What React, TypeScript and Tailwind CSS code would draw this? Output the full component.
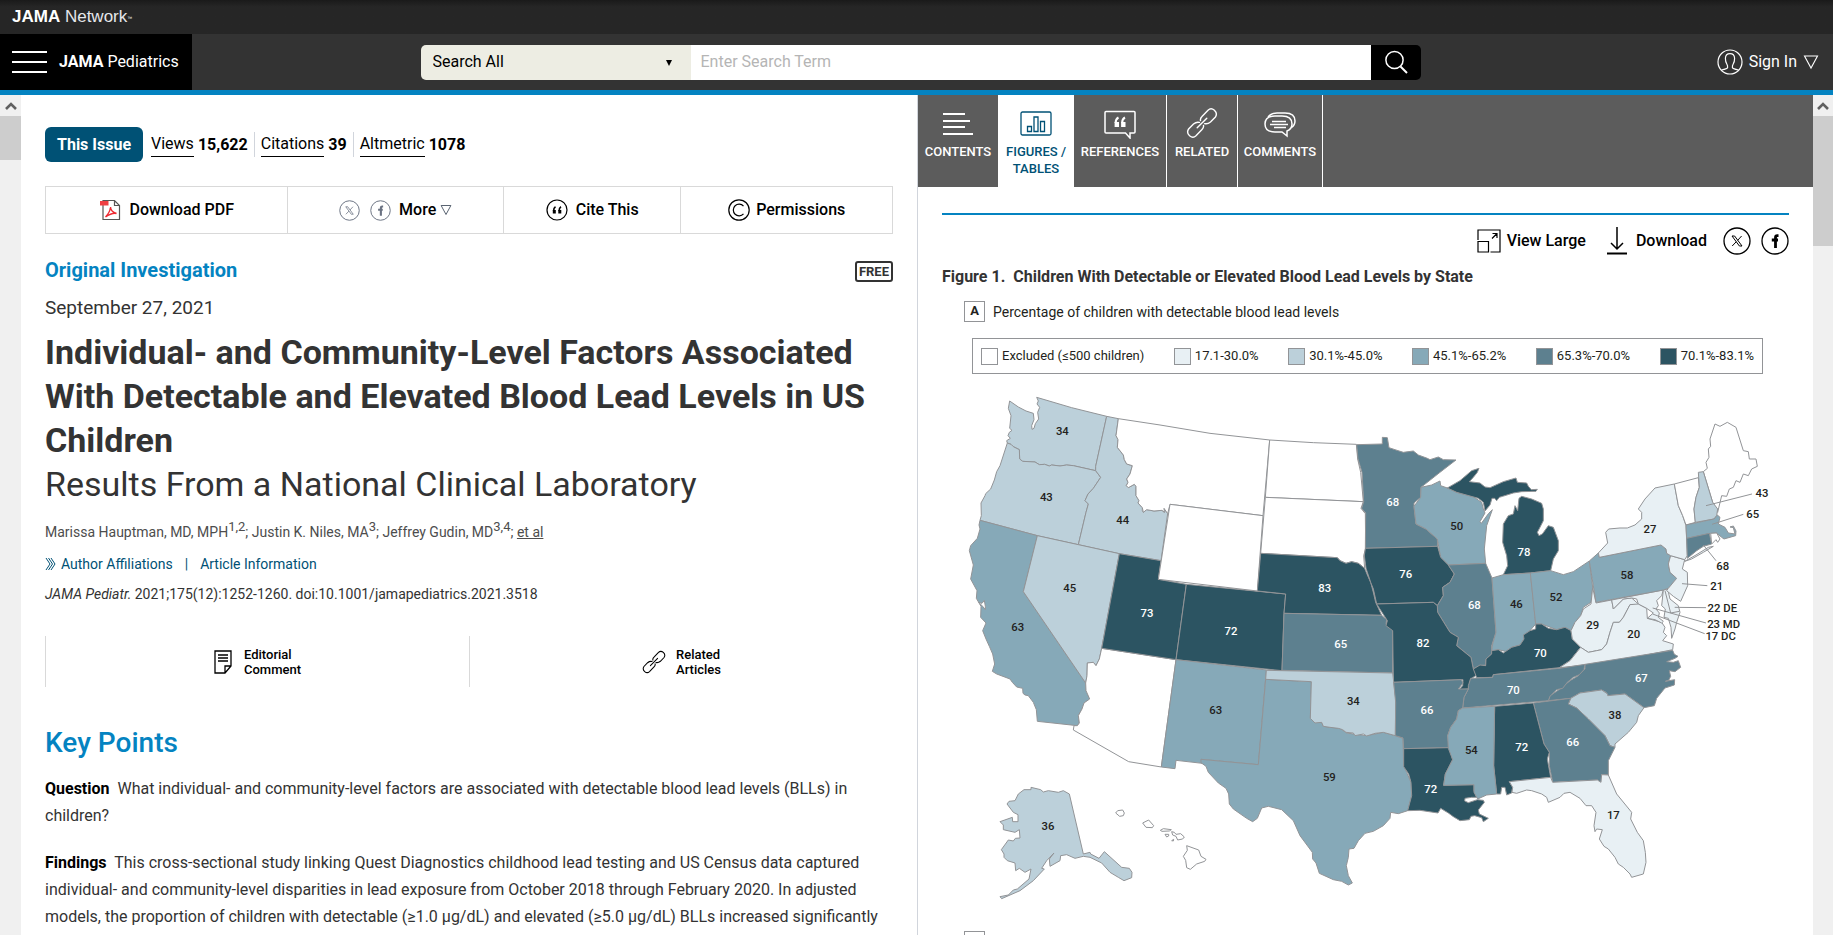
import React from "react";

const EXCLUDED = "#ffffff";
const LEVEL_1 = "#e8f0f4";
const LEVEL_2 = "#bcd0da";
const LEVEL_3 = "#86a9b8";
const LEVEL_4 = "#5d808f";
const LEVEL_5 = "#2c5462";

type Shape = { id: string; fill: string; d: string };
type Label = { x: number; y: number; text: string; light?: boolean };
type Region = { origin: string; shapes: Shape[]; labels: Label[] };

// Outlines are grouped by map quadrant, each with its own origin
const regions: Region[] = [
  {
    origin: "translate(0 0)",
    shapes: [
      { id: "WA", fill: LEVEL_2, d: "M179,96 L205,114 L228,126 L250,133 L252,152 L245,170 L246,181 L252,178 L256,164 L266,150 L263,130 L269,115 L261,105 L265,96 L260,85 L365,116 L470,142 L437,292 L437,305 L370,290 L350,288 L330,291 L305,288 L298,291 L284,286 L268,287 L255,279 L218,277 L209,270 L208,242 L190,233 L183,226 L172,222 L170,215 L181,208 L174,200 L178,190 L186,184 L179,178 L183,140 L175,118Z" },
      { id: "OR", fill: LEVEL_2, d: "M172,222 L183,226 L190,233 L208,242 L209,270 L218,277 L255,279 L268,287 L284,286 L298,291 L305,288 L330,291 L350,288 L370,290 L437,305 L452,325 L430,358 L414,375 L405,395 L415,405 L408,430 L385,527 L262,500 L90,454 L94,440 L93,402 L105,380 L107,374 L122,360 L133,333 L140,308 L150,290Z" },
      { id: "ID", fill: LEVEL_2, d: "M470,142 L505,149 L498,200 L504,212 L502,235 L520,258 L523,272 L530,285 L547,290 L540,315 L530,330 L534,340 L529,350 L535,356 L553,346 L558,352 L558,380 L567,395 L564,402 L577,416 L577,425 L580,430 L590,422 L612,426 L636,424 L643,430 L642,418 L653,434 L633,575 L508,554 L385,527 L408,430 L415,405 L405,395 L414,375 L430,358 L452,325 L437,305 L437,292Z" },
      { id: "MT", fill: EXCLUDED, d: "M505,149 L630,168 L780,193 L959,213 L939,440 L660,406 L653,434 L642,418 L643,430 L636,424 L612,426 L590,422 L580,430 L577,416 L564,402 L567,395 L558,380 L558,352 L553,346 L535,356 L529,350 L534,340 L530,330 L540,315 L547,290 L530,285 L523,272 L520,258 L502,235 L504,212 L498,200Z" },
      { id: "ND", fill: EXCLUDED, d: "M959,213 L1090,221 L1219,226 L1223,270 L1232,310 L1240,398 L946,385Z" },
      { id: "SD", fill: EXCLUDED, d: "M946,385 L1240,398 L1233,418 L1246,434 L1247,538 L1241,560 L1244,598 L1225,583 L1205,578 L1188,583 L1170,575 L1162,566 L932,553Z" },
      { id: "CA", fill: LEVEL_3, d: "M90,454 L262,500 L220,668 L407,942 L408,965 L419,990 L402,1002 L396,1020 L385,1040 L388,1062 L382,1070 L262,1057 L259,1022 L250,1000 L235,980 L225,978 L219,973 L218,958 L200,954 L187,940 L180,930 L140,915 L127,907 L134,885 L128,855 L118,832 L108,810 L98,785 L108,762 L92,745 L93,712 L79,688 L81,665 L62,630 L70,588 L58,545 L62,530 L82,508 L90,480 L87,468Z" },
      { id: "SF Bay", fill: EXCLUDED, d: "M86,700 L98,712 L106,722 L106,712 L103,694 L96,703Z" },
      { id: "NV", fill: LEVEL_2, d: "M262,500 L385,527 L508,554 L455,838 L448,870 L438,890 L430,880 L412,882 L411,920 L407,942 L220,668Z" },
      { id: "AZ", fill: EXCLUDED, d: "M455,838 L678,872 L634,1194 L536,1178 L370,1083 L372,1070 L382,1070 L388,1062 L385,1040 L396,1020 L402,1002 L419,990 L408,965 L407,942 L411,920 L412,882 L430,880 L438,890 L448,870Z" },
      { id: "UT", fill: LEVEL_5, d: "M508,554 L633,575 L625,631 L709,646 L678,872 L455,838Z" },
      { id: "CO", fill: LEVEL_5, d: "M709,646 L1007,675 L1002,735 L996,905 L678,872Z" },
      { id: "WY", fill: EXCLUDED, d: "M660,406 L939,440 L922,666 L625,631Z" },
      { id: "NM", fill: LEVEL_3, d: "M678,872 L949,903 L925,1187 L753,1171 L757,1183 L678,1174 L675,1199 L634,1194Z" },
      { id: "NE", fill: LEVEL_5, d: "M932,553 L1162,566 L1170,575 L1188,583 L1205,578 L1225,583 L1244,598 L1253,620 L1262,640 L1270,670 L1277,700 L1295,739 L1002,733 L1007,675 L922,666Z" },
      { id: "KS", fill: LEVEL_4, d: "M1002,733 L1295,739 L1310,752 L1308,765 L1328,785 L1328,912 L996,904Z" },
    ],
    labels: [
      { x: 337, y: 198, text: "34" },
      { x: 289, y: 395, text: "43" },
      { x: 518, y: 466, text: "44" },
      { x: 359, y: 670, text: "45" },
      { x: 203, y: 785, text: "63" },
      { x: 591, y: 743, text: "73", light: true },
      { x: 843, y: 798, text: "72", light: true },
      { x: 1124, y: 668, text: "83", light: true },
      { x: 1172, y: 838, text: "65", light: true },
      { x: 797, y: 1036, text: "63" },
    ],
  },
  {
    origin: "translate(1170 120)",
    shapes: [
      { id: "MN", fill: LEVEL_4, d: "M50,107 L127,105 L127,85 L142,86 L147,116 L165,122 L190,130 L220,126 L235,138 L262,148 L270,152 L295,144 L310,152 L348,153 L300,190 L243,235 L242,265 L222,282 L222,292 L228,345 L258,360 L292,390 L293,412 L76,418 L77,312 L65,298 L71,278 L66,190 L54,150Z" },
      { id: "WI", fill: LEVEL_3, d: "M243,235 L275,228 L300,216 L302,230 L325,238 L350,250 L400,263 L425,280 L430,300 L435,312 L420,338 L424,343 L446,313 L457,302 L440,350 L433,420 L437,463 L325,468 L302,445 L292,390 L258,360 L228,345 L222,292 L242,265Z" },
      { id: "MI-upper", fill: LEVEL_5, d: "M322,237 L360,215 L395,185 L417,178 L412,190 L400,205 L388,218 L420,222 L435,234 L450,236 L490,218 L528,207 L532,220 L560,222 L565,232 L574,242 L592,241 L588,247 L545,248 L520,252 L488,262 L478,265 L470,275 L464,268 L456,268 L450,288 L435,306 L430,280 L415,268 L350,250Z" },
      { id: "MI-lower", fill: LEVEL_5, d: "M545,262 L575,270 L605,283 L610,300 L610,335 L600,355 L592,370 L597,380 L607,375 L625,350 L640,355 L655,395 L655,425 L640,450 L632,485 L571,492 L490,497 L503,470 L500,440 L488,400 L490,345 L505,320 L520,315 L525,290 L533,305 L537,268Z" },
      { id: "IA", fill: LEVEL_5, d: "M76,418 L293,412 L302,445 L325,468 L343,495 L330,520 L308,535 L310,560 L292,590 L280,580 L110,585 L100,540 L92,520 L78,478 L73,440Z" },
      { id: "IL", fill: LEVEL_4, d: "M325,468 L437,463 L456,507 L468,670 L455,710 L455,735 L438,750 L437,768 L420,770 L400,780 L393,745 L350,710 L355,685 L330,670 L293,610 L292,590 L310,560 L308,535 L330,520 L343,495Z" },
      { id: "IN", fill: LEVEL_3, d: "M456,507 L490,497 L571,492 L587,645 L570,665 L552,690 L540,708 L515,715 L500,728 L475,722 L455,727 L458,705 L468,670Z" },
      { id: "OH", fill: LEVEL_3, d: "M571,492 L632,485 L670,497 L700,488 L748,456 L758,535 L753,580 L730,595 L722,620 L705,640 L693,665 L675,655 L650,662 L605,645 L587,645Z" },
      { id: "MO", fill: LEVEL_5, d: "M110,585 L280,580 L292,590 L293,610 L330,670 L355,685 L350,710 L393,745 L400,780 L410,775 L407,800 L392,810 L385,840 L357,842 L368,830 L369,812 L160,820 L158,665 L138,650 L142,635Z" },
      { id: "KY", fill: LEVEL_5, d: "M400,780 L420,768 L437,770 L438,750 L455,735 L455,725 L475,722 L490,732 L515,715 L540,708 L552,690 L550,678 L570,665 L587,660 L587,645 L605,645 L625,658 L650,662 L675,655 L693,665 L697,690 L722,715 L690,755 L658,776 L460,797 L458,805 L410,806Z" },
      { id: "WV", fill: LEVEL_1, d: "M758,535 L768,582 L815,573 L820,600 L850,570 L875,567 L895,585 L890,590 L870,587 L850,625 L838,640 L820,640 L810,670 L800,705 L785,722 L770,725 L745,730 L722,715 L697,690 L693,665 L705,640 L722,620 L730,600 L753,585Z" },
      { id: "VA", fill: LEVEL_1, d: "M895,585 L920,598 L922,628 L965,640 L975,655 L970,670 L980,680 L968,695 L1000,705 L998,722 L870,748 L740,768 L658,776 L690,755 L722,715 L745,730 L770,725 L785,722 L800,705 L810,670 L820,640 L838,640 L850,625 L870,587Z" },
      { id: "MD", fill: LEVEL_1, d: "M815,573 L970,543 L965,560 L950,575 L955,590 L948,600 L958,612 L955,625 L970,637 L965,642 L945,632 L922,628 L940,612 L920,598 L895,585 L890,570 L875,567 L850,570 L820,600Z" },
      { id: "Delmarva", fill: LEVEL_1, d: "M970,543 L983,540 L990,570 L1015,590 L1020,610 L1010,640 L1005,660 L995,688 L993,655 L985,628 L972,625 L976,600 L965,590Z" },
      { id: "PA", fill: LEVEL_3, d: "M748,456 L775,432 L778,445 L963,408 L978,420 L980,433 L992,440 L985,465 L990,490 L1010,508 L985,538 L970,543 L768,580Z" },
      { id: "NJ", fill: LEVEL_1, d: "M992,440 L1034,452 L1027,480 L1042,490 L1043,530 L1022,577 L1000,562 L980,545 L985,538 L1010,508 L990,490 L985,465Z" },
      { id: "NY", fill: LEVEL_1, d: "M775,432 L803,402 L797,370 L806,360 L840,357 L862,357 L885,348 L905,330 L905,310 L895,300 L915,270 L945,237 L1003,225 L1015,290 L1028,320 L1038,350 L1042,440 L1034,452 L992,440 L980,433 L978,420 L963,408 L778,445Z" },
      { id: "Long Island", fill: LEVEL_1, d: "M1034,457 L1068,438 L1105,415 L1120,412 L1090,430 L1055,450Z" },
      { id: "VT", fill: EXCLUDED, d: "M1003,225 L1075,206 L1078,235 L1068,265 L1062,300 L1066,340 L1038,348 L1028,320 L1015,290Z" },
      { id: "ME", fill: EXCLUDED, d: "M1090,188 L1102,178 L1098,160 L1107,145 L1105,120 L1112,112 L1110,90 L1125,45 L1140,52 L1162,40 L1188,55 L1210,125 L1225,128 L1228,150 L1248,150 L1252,172 L1235,180 L1225,200 L1210,195 L1200,220 L1188,215 L1180,235 L1168,240 L1160,262 L1145,260 L1133,310 L1118,280Z" },
      { id: "NH", fill: LEVEL_2, d: "M1075,190 L1090,188 L1118,280 L1133,300 L1130,320 L1122,330 L1066,340 L1062,300 L1068,265 L1078,235Z" },
      { id: "MA", fill: LEVEL_3, d: "M1038,348 L1122,330 L1132,318 L1140,325 L1135,345 L1155,355 L1165,372 L1185,375 L1180,356 L1170,354 L1180,351 L1188,366 L1187,380 L1152,390 L1145,385 L1130,372 L1112,373 L1040,388Z" },
      { id: "CT", fill: LEVEL_4, d: "M1040,388 L1108,373 L1115,405 L1090,412 L1070,425 L1042,448Z" },
      { id: "RI", fill: EXCLUDED, d: "M1112,373 L1130,372 L1140,390 L1133,400 L1128,392 L1115,405Z" },
    ],
    labels: [
      { x: 158, y: 291, text: "68", light: true },
      { x: 350, y: 364, text: "50" },
      { x: 552, y: 440, text: "78", light: true },
      { x: 197, y: 508, text: "76", light: true },
      { x: 403, y: 600, text: "68", light: true },
      { x: 529, y: 596, text: "46" },
      { x: 648, y: 575, text: "52" },
      { x: 249, y: 714, text: "82", light: true },
      { x: 601, y: 744, text: "70", light: true },
      { x: 758, y: 659, text: "29" },
      { x: 881, y: 687, text: "20" },
      { x: 930, y: 371, text: "27" },
      { x: 861, y: 510, text: "58" },
      { x: 1266, y: 264, text: "43" },
      { x: 1238, y: 326, text: "65" },
      { x: 1148, y: 484, text: "68" },
      { x: 1130, y: 544, text: "21" },
      { x: 1147, y: 609, text: "22 DE" },
      { x: 1151, y: 656, text: "23 MD" },
      { x: 1142, y: 693, text: "17 DC" },
    ],
  },
  {
    origin: "translate(0 810)",
    shapes: [
      { id: "TX", fill: LEVEL_3, d: "M947,121 L1084,128 L1081,238 L1095,250 L1115,250 L1120,262 L1140,265 L1170,268 L1190,282 L1210,285 L1250,290 L1300,280 L1336,290 L1359,298 L1361,380 L1370,400 L1383,430 L1385,470 L1373,515 L1345,524 L1322,520 L1320,538 L1300,560 L1270,577 L1245,583 L1225,605 L1212,628 L1197,630 L1195,655 L1189,680 L1195,710 L1207,732 L1195,738 L1175,727 L1150,722 L1108,703 L1098,672 L1088,660 L1087,640 L1050,590 L1030,545 L995,512 L955,502 L935,507 L922,538 L908,548 L890,538 L850,510 L838,495 L836,465 L828,448 L805,432 L775,400 L768,382 L753,371 L753,361 L925,377Z" },
      { id: "OK", fill: LEVEL_2, d: "M949,94 L1328,102 L1337,180 L1336,290 L1300,280 L1275,283 L1250,291 L1240,285 L1215,290 L1210,282 L1188,280 L1178,272 L1165,268 L1140,265 L1120,262 L1115,250 L1095,252 L1081,238 L1084,128 L947,121Z" },
      { id: "AK", fill: LEVEL_2, d: "M243,445 L272,452 L280,459 L295,455 L325,460 L340,455 L358,465 L400,645 L420,640 L422,645 L447,658 L463,638 L515,685 L538,688 L546,700 L545,716 L522,725 L505,715 L480,700 L455,672 L420,655 L400,652 L375,658 L350,647 L332,650 L330,665 L300,682 L298,660 L312,642 L290,665 L275,688 L283,690 L250,725 L210,755 L155,779 L150,773 L175,768 L190,753 L202,750 L237,720 L243,690 L225,700 L208,688 L197,695 L195,672 L172,665 L162,655 L162,645 L154,632 L175,603 L190,606 L196,598 L210,597 L208,572 L195,580 L160,572 L160,558 L150,548 L187,535 L188,548 L204,548 L204,527 L190,520 L171,495 L177,487 L195,485 L205,465 L222,452 L243,452Z" },
      { id: "Kauai", fill: EXCLUDED, d: "M497,522 L503,515 L518,513 L523,522 L520,530 L509,532Z" },
      { id: "Oahu", fill: EXCLUDED, d: "M578,552 L596,543 L611,560 L607,566 L588,565Z" },
      { id: "Molokai", fill: EXCLUDED, d: "M631,574 L640,569 L664,572 L658,576 L636,577Z" },
      { id: "Lanai", fill: EXCLUDED, d: "M645,586 L656,586 L656,591 L650,594Z" },
      { id: "Kahoolawe", fill: EXCLUDED, d: "M665,605 L671,601 L670,606Z" },
      { id: "Maui", fill: EXCLUDED, d: "M665,578 L673,580 L678,586 L692,584 L703,594 L698,600 L683,603 L678,592 L668,588Z" },
      { id: "Hawaii", fill: EXCLUDED, d: "M710,620 L746,633 L753,652 L768,661 L764,667 L740,675 L721,691 L710,686 L707,664 L700,652 L712,634Z" },
    ],
    labels: [
      { x: 1210, y: 199, text: "34" },
      { x: 1138, y: 426, text: "59" },
      { x: 294, y: 573, text: "36" },
    ],
  },
  {
    origin: "translate(1170 810)",
    shapes: [
      { id: "NC", fill: LEVEL_4, d: "M735,76 L998,34 L1003,46 L1014,52 L1005,58 L980,68 L1000,70 L1015,65 L1022,85 L1005,98 L988,95 L992,112 L986,124 L976,127 L1004,122 L1003,138 L975,147 L950,178 L943,200 L912,206 L855,165 L803,170 L798,160 L785,153 L720,162 L692,178 L625,185 L630,170 L660,150 L690,125 L715,110 L735,90Z" },
      { id: "TN", fill: LEVEL_4, d: "M392,118 L458,115 L460,107 L658,88 L735,76 L732,92 L718,107 L700,115 L682,130 L668,148 L650,152 L630,172 L625,185 L368,207 L372,175 L385,150 L385,140Z" },
      { id: "SC", fill: LEVEL_2, d: "M692,178 L720,162 L785,153 L803,165 L803,170 L855,165 L912,206 L895,230 L890,250 L865,280 L825,315 L825,325 L810,320 L795,290 L745,240 L710,207 L685,195Z" },
      { id: "GA", fill: LEVEL_4, d: "M580,192 L692,178 L685,195 L710,207 L745,240 L795,290 L810,320 L825,325 L805,365 L805,408 L785,407 L783,430 L772,423 L638,430 L628,380 L628,340 L612,315Z" },
      { id: "AL", fill: LEVEL_5, d: "M464,202 L580,192 L612,315 L628,340 L622,360 L632,415 L508,428 L518,445 L515,462 L500,468 L495,445 L485,445 L482,465 L470,465 L461,380Z" },
      { id: "AR", fill: LEVEL_4, d: "M161,130 L364,122 L369,132 L355,150 L385,150 L372,175 L368,207 L355,215 L350,240 L332,265 L323,290 L328,326 L191,329 L189,297 L166,290 L167,190Z" },
      { id: "LA", fill: LEVEL_5, d: "M191,329 L328,326 L338,362 L316,405 L311,439 L402,437 L402,455 L410,475 L395,475 L375,478 L374,486 L385,491 L412,482 L430,484 L433,490 L415,513 L418,525 L445,538 L430,548 L425,536 L404,530 L393,532 L388,542 L360,545 L340,533 L325,522 L302,508 L294,522 L240,514 L203,515 L215,470 L213,430 L206,405 L191,383Z" },
      { id: "MS", fill: LEVEL_3, d: "M368,207 L464,202 L461,380 L470,465 L440,468 L413,480 L402,460 L402,437 L311,439 L316,405 L338,362 L325,328 L323,290 L332,265 L350,240 L355,215Z" },
      { id: "FL", fill: LEVEL_1, d: "M508,428 L632,415 L638,430 L772,423 L783,430 L785,407 L805,408 L830,465 L875,520 L872,540 L892,580 L910,605 L916,640 L918,670 L910,705 L875,715 L870,705 L850,685 L835,675 L825,655 L805,630 L792,622 L778,600 L787,572 L770,570 L765,578 L762,560 L768,520 L755,500 L738,500 L720,478 L690,460 L672,463 L660,475 L625,490 L620,475 L605,465 L575,455 L560,453 L530,463 L516,460 L518,445Z" },
    ],
    labels: [
      { x: 904, y: 130, text: "67", light: true },
      { x: 520, y: 164, text: "70", light: true },
      { x: 261, y: 226, text: "66", light: true },
      { x: 825, y: 240, text: "38" },
      { x: 698, y: 322, text: "66", light: true },
      { x: 545, y: 336, text: "72", light: true },
      { x: 394, y: 346, text: "54" },
      { x: 272, y: 462, text: "72", light: true },
      { x: 820, y: 540, text: "17" },
    ],
  },
];

const legend = [
  { label: "Excluded (≤500 children)", swatch: "bg-white" },
  { label: "17.1-30.0%", swatch: "bg-[#e8f0f4]" },
  { label: "30.1%-45.0%", swatch: "bg-[#bcd0da]" },
  { label: "45.1%-65.2%", swatch: "bg-[#86a9b8]" },
  { label: "65.3%-70.0%", swatch: "bg-[#5d808f]" },
  { label: "70.1%-83.1%", swatch: "bg-[#2c5462]" },
];

function StateMap() {
  return (
    <svg viewBox="-24 15 2541 1660" className="block w-full" role="img" aria-label="Map of detectable blood lead levels by state">
      {regions.map((region) => (
        <g key={region.origin} transform={region.origin} stroke="#929497" strokeWidth="3" strokeLinejoin="round">
          {region.shapes.map((shape) => (
            <path key={shape.id} d={shape.d} fill={shape.fill} />
          ))}
        </g>
      ))}
      {/* Leader lines for the small eastern states */}
      <g transform="translate(1170 120)" fill="none" stroke="#929497" strokeWidth="3">
        <path d="M975,545 L992,612 L1018,607" />
        <path d="M1098,290 L1236,255 M1116,346 L1210,316 M1090,408 L1128,455 M1026,524 L1102,530" />
        <path d="M1004,595 L1098,596 M938,597 L1098,642 M938,615 L1094,674" />
      </g>
      {regions.map((region) => (
        <g key={region.origin} transform={region.origin} fontSize="34" fontWeight="500" textAnchor="middle">
          {region.labels.map((label) => (
            <text key={`${label.x}-${label.y}`} x={label.x} y={label.y} fill={label.light ? "#ffffff" : "#231f20"}>
              {label.text}
            </text>
          ))}
        </g>
      ))}
    </svg>
  );
}

function XIcon({ className }: { className: string }) {
  return (
    <svg viewBox="0 0 28 28" className={className} fill="none" stroke="currentColor">
      <circle cx="14" cy="14" r="13" strokeWidth="1.3" />
      <path d="M9,9 h2.6 L19,19 h-2.6 Z M18.6,9 L14.6,13.4 M13.2,14.8 L9.2,19" strokeWidth="1" />
    </svg>
  );
}

function FacebookIcon({ className }: { className: string }) {
  return (
    <svg viewBox="0 0 28 28" className={className} fill="none" stroke="currentColor">
      <circle cx="14" cy="14" r="13" strokeWidth="1.3" />
      <path d="M17.5,8.6 h-1.2 q-1.8,0 -1.8,1.8 V21 M10.8,13 h6.2" strokeWidth="2.8" />
    </svg>
  );
}

function LinkIcon({ className }: { className: string }) {
  return (
    <svg viewBox="0 0 32 32" className={className} fill="none" stroke="currentColor" strokeWidth="1.4" strokeLinecap="round">
      <path d="M14.5,13.5 Q14,11.5 16,9.5 L22,3.2 Q25,0.4 28.4,3.2 Q31.8,6.4 29.4,10 L24.5,15 Q21.6,17.4 18.6,16.6" />
      <path d="M13.4,15.4 Q10.4,14.6 7.5,17 L2.6,22 Q0.2,25.6 3.6,28.8 Q7,31.6 10,28.8 L16,22.5 Q18,20.5 17.5,18.5" />
      <path d="M11.2,20.8 L20.8,11.2" />
    </svg>
  );
}

function TriangleIcon({ className }: { className: string }) {
  return (
    <svg viewBox="0 0 16 16" className={className} fill="none" stroke="currentColor" strokeWidth="1.1">
      <path d="M1.5,2 H14.5 L8,14 Z" />
    </svg>
  );
}

function ScrollTrack({ width, thumb }: { width: string; thumb: string }) {
  return (
    <div className={`shrink-0 bg-[#f0f0f0] ${width}`}>
      <div className="flex h-[21px] items-center justify-center">
        <svg viewBox="0 0 12 12" className="size-3" fill="none" stroke="#606060" strokeWidth="2.6">
          <path d="M1,9 L6,4 L11,9" />
        </svg>
      </div>
      <div className={`bg-[#cdcdcd] ${thumb}`} />
    </div>
  );
}

function Header() {
  return (
    <header className="shrink-0">
      <div className="flex h-[34px] items-center bg-linear-to-b from-[#1a1a1a] to-[#262626] to-20% px-3 font-['Liberation_Sans',sans-serif] text-[17px] text-white">
        <a href="#network">
          <b>JAMA</b> <span className="text-gray-200">Network</span>
          <sup className="text-[5px]">™</sup>
        </a>
      </div>
      <div className="flex h-[61px] items-stretch justify-between border-b-5 border-[#0483c1] bg-[#333]">
        <div className="flex w-[192px] items-center gap-3 bg-black pl-3 text-white">
          <button type="button" aria-label="Menu" className="flex w-[35px] flex-col gap-2">
            <span className="h-0.5 bg-white" />
            <span className="h-0.5 bg-white" />
            <span className="h-0.5 bg-white" />
          </button>
          <a href="#journal" className="text-base">
            <b>JAMA</b> Pediatrics
          </a>
        </div>
        <form className="flex h-[35px] w-[1000px] self-center overflow-hidden rounded-[5px]">
          <div className="relative w-[270px]">
            <select aria-label="Search scope" className="h-full w-full appearance-none bg-[#edede3] pl-3 text-base text-black">
              <option>Search All</option>
            </select>
            <svg viewBox="0 0 8 8" className="pointer-events-none absolute top-3.5 right-4.5 size-2" fill="#000">
              <path d="M1,1 H7 L4,7 Z" />
            </svg>
          </div>
          <input type="search" aria-label="Search term" placeholder="Enter Search Term" className="min-w-0 flex-1 bg-white px-2.5 text-base text-black placeholder:text-[#b5b5b5]" />
          <button type="submit" aria-label="Search" className="flex w-[50px] items-center justify-center bg-black text-white">
            <svg viewBox="0 0 24 24" className="size-6" fill="none" stroke="currentColor" strokeWidth="1.5">
              <circle cx="10.5" cy="10" r="8.6" />
              <path d="M16.5,16.5 L23,23" strokeWidth="2" />
            </svg>
          </button>
        </form>
        <button type="button" className="flex w-[184px] items-center justify-end gap-1.5 pr-3.5 text-base text-white">
          <svg viewBox="0 0 26 26" className="size-[26px]" fill="none" stroke="currentColor" strokeWidth="1.2">
            <circle cx="13" cy="13" r="12" />
            <path d="M4.5,21 Q10.5,19.5 10.6,18.6 Q10.8,16.5 9.8,15 Q8.4,12.8 8.4,9.2 Q8.6,4.6 13,4.6 Q17.4,4.6 17.6,9.2 Q17.6,12.8 16.2,15 Q15.2,16.5 15.4,18.6 Q15.5,19.5 21.5,21" />
          </svg>
          Sign In
          <TriangleIcon className="size-4" />
        </button>
      </div>
    </header>
  );
}

const metrics = [
  { label: "Views", value: "15,622" },
  { label: "Citations", value: "39" },
  { label: "Altmetric", value: "1078" },
];

function Article() {
  return (
    <main className="min-w-0 flex-1 overflow-hidden px-6 pt-8 text-[#333]">
      <div className="flex items-center gap-2">
        <a href="#issue" className="flex h-[35px] items-center rounded-md bg-[#005175] px-3 text-base font-bold text-white">
          This Issue
        </a>
        <ul className="flex items-center text-base text-black">
          {metrics.map((metric) => (
            <li key={metric.label} className="flex items-center gap-1 border-l border-gray-300 px-1.5 leading-4 first:border-l-0 first:pl-0">
              <a href={`#${metric.label}`} className="border-b border-black py-1">
                {metric.label}
              </a>
              <b>{metric.value}</b>
            </li>
          ))}
        </ul>
      </div>

      <div className="mt-6 grid h-12 grid-cols-[243fr_216fr_178fr_211fr] divide-x divide-[#d9d9d9] border border-[#d9d9d9] text-base font-medium text-black">
        <button type="button" className="flex items-center justify-center gap-2">
          <svg viewBox="0 0 22 22" className="size-[22px]" fill="none">
            <path d="M4,1.5 H15.5 L20.5,6.5 V20.5 H4 Z M15.5,1.5 V6.5 H20.5" stroke="#555" strokeWidth="1.2" />
            <path d="M1,2 H9.5 V6.5 H1 Z" fill="#ef3e42" />
            <path d="M6.5,18 Q11,13.5 11.5,8 Q11.5,12.5 17.5,14.5 Q13,13.5 6.5,18 Z" stroke="#ee2b33" strokeWidth="1.4" />
          </svg>
          Download PDF
        </button>
        <div className="flex items-center justify-center gap-2">
          <a href="#x" aria-label="Share on X" className="text-gray-500">
            <XIcon className="size-[21px]" />
          </a>
          <a href="#facebook" aria-label="Share on Facebook" className="text-gray-500">
            <FacebookIcon className="ml-0.5 size-[21px]" />
          </a>
          <button type="button" className="flex items-center gap-1">
            More
            <TriangleIcon className="size-3 text-gray-700" />
          </button>
        </div>
        <button type="button" className="flex items-center justify-center gap-2">
          <svg viewBox="0 0 22 22" className="size-[22px]" fill="none" stroke="currentColor">
            <circle cx="11" cy="11" r="10" strokeWidth="1.2" />
            <path d="M9.5,7.8 Q7.6,9 7.6,12 M15,7.8 Q13.1,9 13.1,12" strokeWidth="1.6" />
            <path d="M6.8,11 h3 v3.4 h-3 Z M12.3,11 h3 v3.4 h-3 Z" fill="currentColor" stroke="none" />
          </svg>
          Cite This
        </button>
        <button type="button" className="flex items-center justify-center gap-1.5">
          <svg viewBox="0 0 22 22" className="size-[22px]" fill="none" stroke="currentColor" strokeWidth="1.2">
            <circle cx="11" cy="11" r="10.2" />
            <path d="M15.5,7.2 A5.8,5.8 0 1 0 15.5,14.8" />
          </svg>
          Permissions
        </button>
      </div>

      <div className="mt-6 flex h-6 items-end justify-between">
        <p className="text-xl leading-6 font-bold text-[#0483c1]">Original Investigation</p>
        <span className="flex h-[21px] items-center rounded-[3px] border-2 border-[#333] px-0.5 text-[13px] font-bold">FREE</span>
      </div>
      <p className="mt-3.5 text-[19px] leading-6">September 27, 2021</p>
      <h1 className="mt-2.5 text-[34px] leading-11">
        <b className="block">
          Individual- and Community-Level Factors Associated With Detectable and Elevated Blood Lead Levels in US Children
        </b>
        Results From a National Clinical Laboratory
      </h1>
      <p className="mt-4 text-sm leading-5 text-[#4d4d4d]">
        Marissa Hauptman, MD, MPH<sup className="text-[13px]">1,2</sup>; Justin K. Niles, MA<sup className="text-[13px]">3</sup>; Jeffrey Gudin, MD
        <sup className="text-[13px]">3,4</sup>; <a href="#authors" className="underline">et al</a>
      </p>
      <div className="mt-3 flex items-center text-sm leading-5 text-[#005175]">
        <svg viewBox="0 0 12 12" className="mr-1 size-3" fill="none" stroke="currentColor" strokeWidth="1">
          <path d="M1,0 L5,6 L1,12 M3.5,0 L7.5,6 L3.5,12 M6,0 L10,6 L6,12" />
        </svg>
        <a href="#affiliations">Author Affiliations</a>
        <span className="mx-3">|</span>
        <a href="#information">Article Information</a>
      </div>
      <p className="mt-2.5 text-sm leading-5">
        <i>JAMA Pediatr. </i>2021;175(12):1252-1260. doi:10.1001/jamapediatrics.2021.3518
      </p>

      <div className="mt-8 grid h-[51px] grid-cols-2 text-[13px] leading-[15px] font-medium text-black">
        <a href="#editorial" className="flex items-center justify-center gap-3 border-l border-[#d9d9d9]">
          <svg viewBox="0 0 18 24" className="h-6 w-[18px]" fill="none" stroke="currentColor" strokeWidth="1.3">
            <path d="M1,1 H17 V16 L11,23 H1 Z M17,16 H11 V23" />
            <path d="M4,5 H14 M4,8 H14 M4,11 H14" />
          </svg>
          <span>
            Editorial
            <br />
            Comment
          </span>
        </a>
        <a href="#related" className="flex items-center justify-center gap-2.5 border-l border-[#d9d9d9]">
          <LinkIcon className="size-6" />
          <span>
            Related
            <br />
            Articles
          </span>
        </a>
      </div>

      <h2 className="mt-10 text-[28px] leading-8 font-medium text-[#0483c1]">Key Points</h2>
      <p className="mt-4 text-base leading-[27px]">
        <b className="text-black">Question</b>&nbsp; What individual- and community-level factors are associated with detectable blood lead levels (BLLs) in children?
      </p>
      <p className="mt-5 text-base leading-[27px]">
        <b className="text-black">Findings</b>&nbsp; This cross-sectional study linking Quest Diagnostics childhood lead testing and US Census data captured individual- and community-level disparities in lead exposure from October 2018 through February 2020. In adjusted models, the proportion of children with detectable (≥1.0 μg/dL) and elevated (≥5.0 μg/dL) BLLs increased significantly
      </p>
    </main>
  );
}

function FigureTabs() {
  const tab = "flex flex-col items-center gap-1 pt-3 text-[13px] leading-[17px] font-medium";
  return (
    <nav className="flex h-[92px] bg-[#5c5c5c] text-white">
      <button type="button" className={`${tab} w-20 shrink-0`}>
        <svg viewBox="0 0 32 32" className="size-8" fill="none" stroke="currentColor" strokeWidth="2">
          <path d="M1,7 H23 M1,14 H28 M1,20 H23 M1,27 H31" />
        </svg>
        CONTENTS
      </button>
      <button type="button" className={`${tab} w-[76px] shrink-0 bg-white text-[#005175]`}>
        <svg viewBox="0 0 32 32" className="size-8" fill="none" stroke="currentColor" strokeWidth="1.3">
          <rect x="1" y="5" width="30" height="23" rx="1.5" />
          <path d="M7.5,19.5 h4 v5 h-4 Z M14,10 h4 v14.5 h-4 Z M20.5,14.5 h4 v10 h-4 Z" />
        </svg>
        <span>
          FIGURES /
          <br />
          TABLES
        </span>
      </button>
      <button type="button" className={`${tab} w-[93px] shrink-0 border-r border-white`}>
        <svg viewBox="0 0 32 32" className="size-8" fill="none" stroke="currentColor" strokeWidth="1.5">
          <path d="M2,4.5 H30 Q31,4.5 31,5.5 V25 Q31,26 30,26 H26 V31 L21.5,26 H2 Q1,26 1,25 V5.5 Q1,4.5 2,4.5 Z" />
          <path d="M14.5,10.5 Q11.6,12 11.6,16 M21,10.5 Q18.1,12 18.1,16" strokeWidth="2" />
          <path d="M10.6,15 h4.4 v5 h-4.4 Z M17.1,15 h4.4 v5 h-4.4 Z" fill="currentColor" stroke="none" />
        </svg>
        REFERENCES
      </button>
      <button type="button" className={`${tab} w-[71px] shrink-0 border-r border-white`}>
        <LinkIcon className="size-8" />
        RELATED
      </button>
      <button type="button" className={`${tab} w-[85px] shrink-0 border-r border-white`}>
        <svg viewBox="0 0 32 32" className="size-8" fill="none" stroke="currentColor" strokeWidth="1.5">
          <path d="M11,9 H18 Q28,9 28,17 Q28,22 23,24 V29 L18,25 H11 Q1,25 1,17 Q1,9 11,9 Z" />
          <path d="M4,10 Q7,6 13,6 H21 Q31,6 31,14 Q31,18 27.5,20.5" />
          <path d="M8,14.5 H22 M6,17.5 H24 M10,20.5 H22" strokeWidth="1.3" />
        </svg>
        COMMENTS
      </button>
    </nav>
  );
}

function FigurePanel() {
  return (
    <aside className="min-w-0 flex-1 overflow-hidden">
      <FigureTabs />
      <div className="px-6 pt-[26px]">
        <div className="flex h-12 items-end justify-end border-t-2 border-[#0483c1] text-base font-medium text-black">
          <button type="button" className="mr-5 flex h-10 items-center gap-1.5">
            <svg viewBox="0 0 24 24" className="size-6" fill="none" stroke="currentColor" strokeWidth="1.2">
              <path d="M1,11 V1 H23 V23 H13.5 M1,12.5 H11.5 V23 H1 Z M15,9.5 L20,4.5 M15.5,4.5 H20 V9" />
            </svg>
            View Large
          </button>
          <button type="button" className="mr-4 flex h-10 items-center gap-2">
            <svg viewBox="0 0 22 28" className="h-7 w-[22px]" fill="none" stroke="currentColor" strokeWidth="1.5">
              <path d="M11,0 V22 M5,16 L11,22 L17,16" />
              <path d="M1,26.5 H21" strokeWidth="2" />
            </svg>
            Download
          </button>
          <a href="#share-x" aria-label="Share figure on X" className="mr-2.5 flex h-10 items-center">
            <XIcon className="size-7" />
          </a>
          <a href="#share-facebook" aria-label="Share figure on Facebook" className="flex h-10 items-center">
            <FacebookIcon className="size-7" />
          </a>
        </div>
        <h3 className="mt-1 text-base leading-6 font-bold text-[#333]">Figure 1.&nbsp; Children With Detectable or Elevated Blood Lead Levels by State</h3>
        <div className="mt-3 flex h-[21px] items-center gap-2 pl-[22px] text-sm text-[#231f20]">
          <span className="flex size-[21px] items-center justify-center border border-[#929497] text-[13px] font-bold">A</span>
          Percentage of children with detectable blood lead levels
        </div>
        <ul className="mt-4 mr-[26px] ml-[30px] flex h-9 items-center justify-between border border-[#929497] px-2 text-[13px] text-[#231f20]">
          {legend.map((item) => (
            <li key={item.label} className="flex items-center gap-1">
              <span className={`size-[17px] border border-[#929497] ${item.swatch}`} />
              {item.label}
            </li>
          ))}
        </ul>
        <StateMap />
        <div className="mt-1 ml-[22px] size-[21px] border border-[#929497]" />
      </div>
    </aside>
  );
}

export default function App() {
  return (
    <div className="flex h-screen flex-col overflow-hidden bg-white font-[Roboto,sans-serif]">
      <Header />
      <div className="grid min-h-0 flex-1 grid-cols-[918fr_915fr]">
        <div className="flex min-h-0 min-w-0 border-r border-gray-300">
          <ScrollTrack width="w-[21px]" thumb="h-11" />
          <Article />
        </div>
        <div className="flex min-h-0 min-w-0">
          <FigurePanel />
          <ScrollTrack width="w-5" thumb="h-[130px]" />
        </div>
      </div>
    </div>
  );
}
